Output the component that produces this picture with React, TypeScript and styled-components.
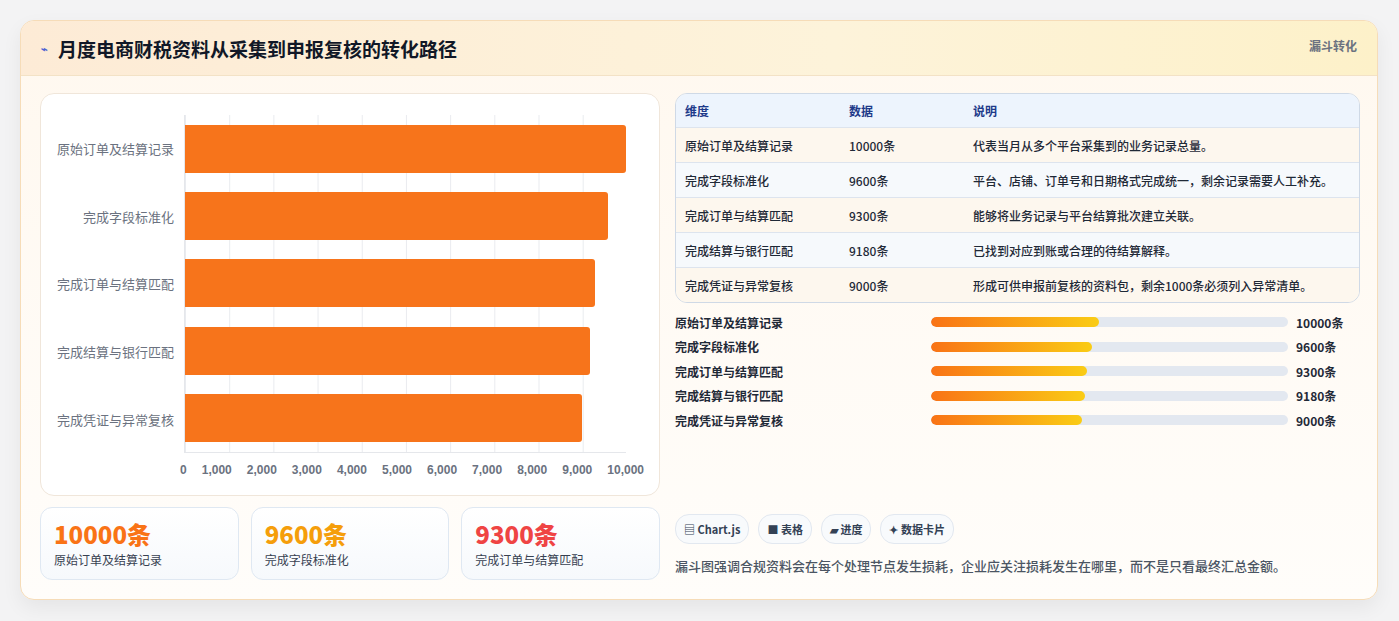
import styled, { createGlobalStyle } from "styled-components"

const Global = createGlobalStyle`
  html, body { margin: 0; background: #f3f3f4; }
  body { font-family: "Noto Sans CJK SC", "Noto Sans", sans-serif; }
`

const Page = styled.div`
  width: 1399px;
  height: 621px;
  padding: 20px 21px 0 20px;
  box-sizing: border-box;
`

const Card = styled.div`
  height: 578px;
  border: 1px solid #f6dcb8;
  border-radius: 14px;
  background: linear-gradient(180deg, #fff8ef 0%, #fffdfa 100%);
  box-shadow: 0 8px 20px rgba(0,0,0,0.06);
  overflow: hidden;
  display: flex;
  flex-direction: column;
`

const Header = styled.div`
  height: 54px;
  display: flex;
  align-items: center;
  justify-content: space-between;
  padding: 0 20px;
  background: linear-gradient(90deg, #fdebd6 0%, #fdf3da 60%, #fdf1c9 100%);
  border-bottom: 1px solid #f3e2c6;
`

const Title = styled.h1`
  margin: 0;
  font-size: 19px;
  font-weight: 700;
  color: #111827;
  display: flex;
  align-items: center;
  gap: 10px;
  & span { color: #4f63d2; font-size: 11px; }
`

const Tag = styled.div`
  align-self: flex-start;
  margin-top: 16px;
  font-size: 12px;
  font-weight: 700;
  color: #6b7280;
`

const Body = styled.div`
  flex: 1;
  display: grid;
  grid-template-columns: 620px 1fr;
  gap: 15px;
  padding: 17px 17px 0 19px;
`

const Col = styled.div`
  display: flex;
  flex-direction: column;
`

const ChartPanel = styled.div`
  height: 403px;
  box-sizing: border-box;
  background: #fff;
  border: 1px solid #f0e6da;
  border-radius: 14px;
  padding: 21px 16px 0 0;
  display: grid;
  grid-template-columns: 143px 442px;
  grid-template-rows: 338px 38px;
`

const YLabels = styled.div`
  display: flex;
  flex-direction: column;
  justify-content: space-around;
  align-items: flex-end;
  padding-right: 10px;
  font-size: 13px;
  color: #6b7280;
`

const Plot = styled.div`
  position: relative;
  border-left: 1px solid #e5e7eb;
  border-bottom: 1px solid #e5e7eb;
  background-image: linear-gradient(90deg, #e9ebef 1px, transparent 1px);
  background-size: 44.2px 100%;
  display: flex;
  flex-direction: column;
  justify-content: space-around;
`

const Bar = styled.div`
  height: 48px;
  background: #f7741b;
  border-radius: 0 3px 3px 0;
  position: relative;
`

const XTicks = styled.div`
  grid-column: 2;
  display: flex;
  justify-content: space-between;
  margin: 0 -18px 0 -4px;
  padding-top: 10px;
  font-size: 12px;
  font-weight: 600;
  color: #6b7280;
  font-family: "Liberation Sans", sans-serif;
`

const Stats = styled.div`
  margin-top: 11px;
  display: grid;
  grid-template-columns: repeat(3, 1fr);
  gap: 12px;
`

const Stat = styled.div`
  height: 73px;
  box-sizing: border-box;
  border: 1px solid #dfe8f2;
  border-radius: 12px;
  background: linear-gradient(180deg, #fff 0%, #f6f9fc 100%);
  padding: 9px 13px;
`

const StatValue = styled.div<{ color: string }>`
  font-size: 24px;
  font-weight: 800;
  color: ${p => p.color};
  line-height: 34px;
`

const StatLabel = styled.div`
  font-size: 12px;
  color: #374151;
`

const Table = styled.div`
  border: 1px solid #cfd9e6;
  border-radius: 12px;
  overflow: hidden;
  font-size: 12px;
`

const Row = styled.div<{ kind: "head" | "odd" | "even" }>`
  display: grid;
  grid-template-columns: 164px 124px 1fr;
  height: ${p => (p.kind === "head" ? 33 : 34)}px;
  align-items: center;
  padding: 0 9px;
  border-bottom: 1px solid #dde4ee;
  &:last-child { border-bottom: none; }
  background: ${p => (p.kind === "head" ? "#edf4fd" : p.kind === "odd" ? "#fdf7ee" : "#f6f9fc")};
  color: ${p => (p.kind === "head" ? "#1e3a8a" : "#1f2937")};
  font-weight: ${p => (p.kind === "head" ? 700 : 500)};
`

const Progress = styled.div`
  margin-top: 10px;
  display: flex;
  flex-direction: column;
  gap: 6px;
`

const PRow = styled.div`
  display: grid;
  grid-template-columns: 256px 357px 1fr;
  gap: 0;
  align-items: center;
  height: 18.5px;
  font-size: 12px;
  font-weight: 600;
  color: #1f2937;
  & > :last-child { padding-left: 8px; font-weight: 700; }
`

const Track = styled.div`
  height: 10px;
  border-radius: 5px;
  background: #e3e8f0;
  overflow: hidden;
`

const Fill = styled.div`
  height: 100%;
  border-radius: 5px;
  background: linear-gradient(90deg, #f97316 0%, #facc15 100%);
`

const Chips = styled.div`
  margin-top: auto;
  display: flex;
  gap: 9px;
`

const Chip = styled.div`
  height: 28px;
  padding: 0 8px;
  display: flex;
  align-items: center;
  border: 1px solid #e2e8f0;
  border-radius: 14px;
  background: #f8fafc;
  font-size: 11px;
  font-weight: 600;
  color: #334155;
`

const Note = styled.p`
  margin: 12px 0 24px;
  font-size: 13px;
  color: #4b5563;
  font-weight: 500;
`

const data = [
  { name: "原始订单及结算记录", v: 10000, desc: "代表当月从多个平台采集到的业务记录总量。" },
  { name: "完成字段标准化", v: 9600, desc: "平台、店铺、订单号和日期格式完成统一，剩余记录需要人工补充。" },
  { name: "完成订单与结算匹配", v: 9300, desc: "能够将业务记录与平台结算批次建立关联。" },
  { name: "完成结算与银行匹配", v: 9180, desc: "已找到对应到账或合理的待结算解释。" },
  { name: "完成凭证与异常复核", v: 9000, desc: "形成可供申报前复核的资料包，剩余1000条必须列入异常清单。" },
]

export default function App() {
  return (
    <Page>
      <Global />
      <Card>
        <Header>
          <Title><span>⌁</span>月度电商财税资料从采集到申报复核的转化路径</Title>
          <Tag>漏斗转化</Tag>
        </Header>
        <Body>
          <Col>
            <ChartPanel>
              <YLabels>{data.map(d => <div key={d.name}>{d.name}</div>)}</YLabels>
              <Plot>
                {data.map(d => <Bar key={d.name} style={{ width: `${(d.v / 10000) * 100}%` }} />)}
              </Plot>
              <XTicks>
                {["0", "1,000", "2,000", "3,000", "4,000", "5,000", "6,000", "7,000", "8,000", "9,000", "10,000"].map(t => <span key={t}>{t}</span>)}
              </XTicks>
            </ChartPanel>
            <Stats>
              <Stat><StatValue color="#f97316">10000条</StatValue><StatLabel>原始订单及结算记录</StatLabel></Stat>
              <Stat><StatValue color="#f59e0b">9600条</StatValue><StatLabel>完成字段标准化</StatLabel></Stat>
              <Stat><StatValue color="#ef4444">9300条</StatValue><StatLabel>完成订单与结算匹配</StatLabel></Stat>
            </Stats>
          </Col>
          <Col>
            <Table>
              <Row kind="head"><div>维度</div><div>数据</div><div>说明</div></Row>
              {data.map((d, i) => (
                <Row key={d.name} kind={i % 2 === 0 ? "odd" : "even"}>
                  <div>{d.name}</div><div>{d.v}条</div><div>{d.desc}</div>
                </Row>
              ))}
            </Table>
            <Progress>
              {data.map(d => (
                <PRow key={d.name}>
                  <div>{d.name}</div>
                  <Track><Fill style={{ width: `${(d.v / 10000) * 47}%` }} /></Track>
                  <div>{d.v}条</div>
                </PRow>
              ))}
            </Progress>
            <Chips>
              <Chip>▤ Chart.js</Chip>
              <Chip>■ 表格</Chip>
              <Chip>▰ 进度</Chip>
              <Chip>✦ 数据卡片</Chip>
            </Chips>
            <Note>漏斗图强调合规资料会在每个处理节点发生损耗，企业应关注损耗发生在哪里，而不是只看最终汇总金额。</Note>
          </Col>
        </Body>
      </Card>
    </Page>
  )
}
